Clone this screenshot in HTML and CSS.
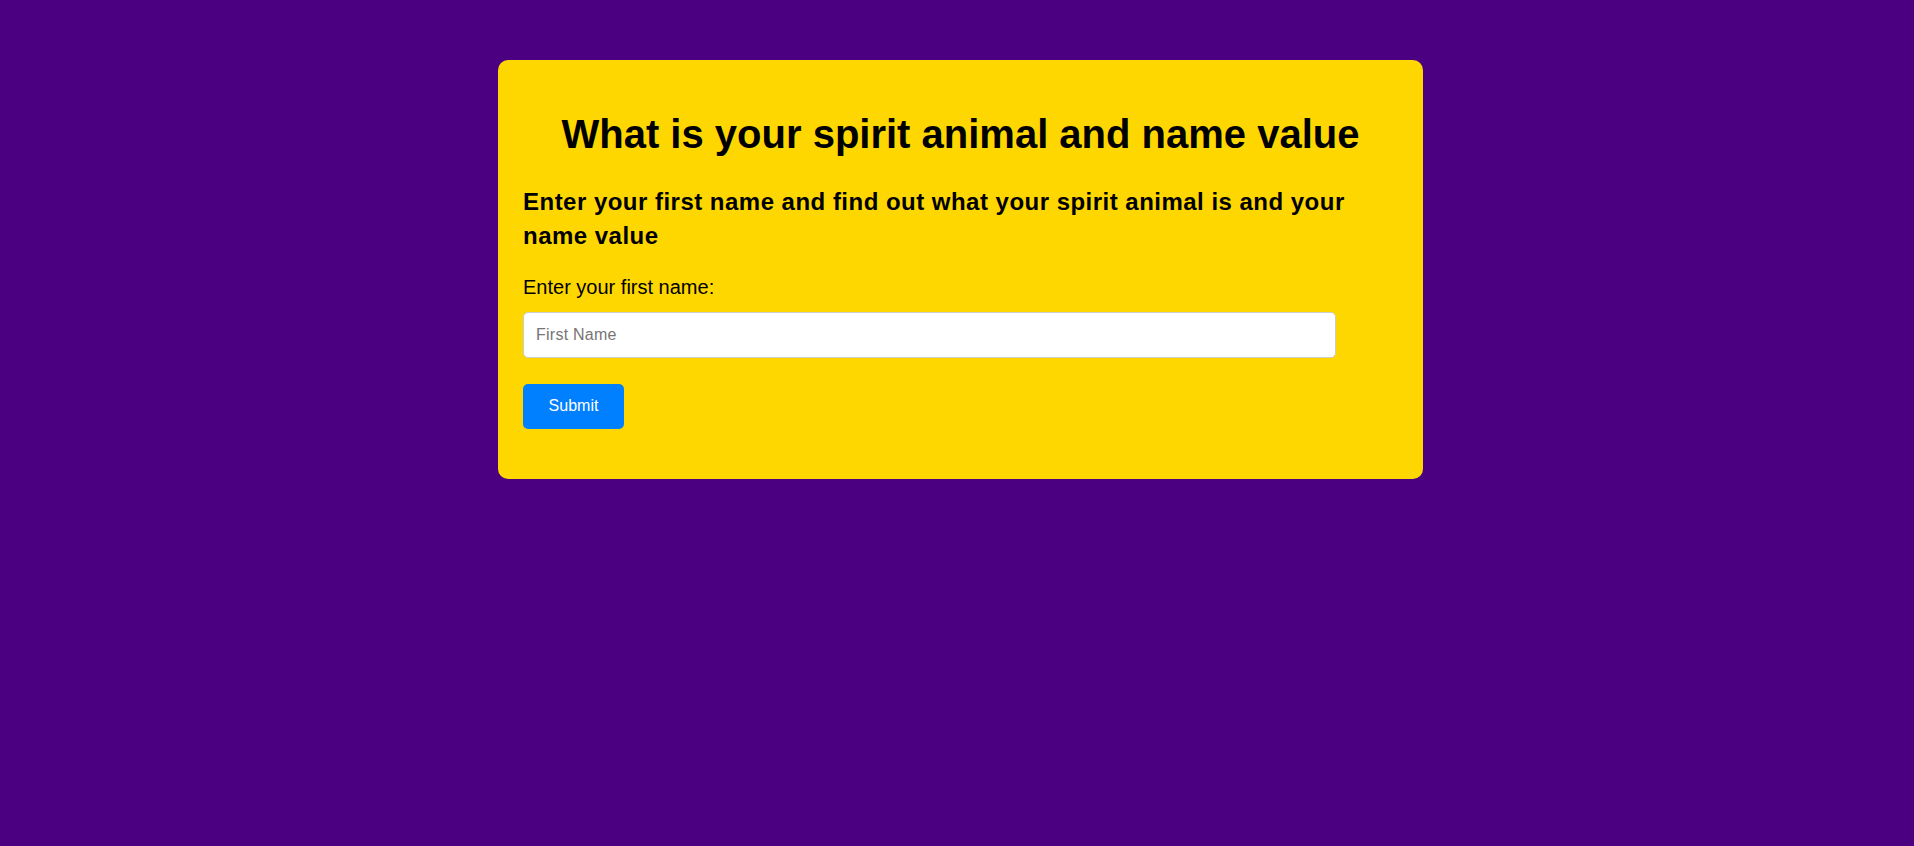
FILE: index.html
```html
<!DOCTYPE html>
<html lang="en">
<head>
<meta charset="utf-8">
<title>Spirit Animal</title>
<link rel="stylesheet" href="styles.css">
</head>
<body>
  <main class="card">
    <h1 class="title">What is your spirit animal and name value</h1>
    <h3 class="subtitle">Enter your first name and find out what your spirit animal is and your name value</h3>
    <form class="form" onsubmit="return false;">
      <label class="label" for="firstName">Enter your first name:</label>
      <input class="input" id="firstName" type="text" placeholder="First Name">
      <button class="button" type="submit">Submit</button>
    </form>
  </main>
</body>
</html>
```

FILE: styles.css
```css
html, body {
  margin: 0;
  padding: 0;
}

body {
  background: #4b0082;
  font-family: "Liberation Sans", Arial, sans-serif;
  color: #000;
  padding: 60px 0 0 7px;
  min-height: 846px;
  box-sizing: border-box;
}

.card {
  width: 925px;
  box-sizing: border-box;
  margin: 0 auto;
  background: #ffd700;
  border-radius: 10px;
  padding: 25px 25px 50px 25px;
}

.title {
  margin: 25px 0 0 0;
  font-size: 40px;
  line-height: 48px;
  font-weight: bold;
  text-align: center;
}

.subtitle {
  margin: 27px 0 0 0;
  font-size: 24px;
  line-height: 33.6px;
  font-weight: bold;
  letter-spacing: 0.48px;
}

.form {
  display: flex;
  flex-direction: column;
  align-items: flex-start;
  margin-top: 21px;
}

.label {
  font-size: 20px;
  line-height: 28px;
}

.input {
  margin-top: 11px;
  width: 813px;
  height: 46px;
  box-sizing: border-box;
  border: 1px solid #cccccc;
  border-radius: 5px;
  background: #fff;
  padding: 0 12px;
  font-family: "Liberation Sans", Arial, sans-serif;
  font-size: 16px;
  color: #000;
  outline: none;
}

.input::placeholder {
  color: #757575;
  letter-spacing: 0.25px;
}

.button {
  margin-top: 26px;
  width: 101px;
  height: 45px;
  box-sizing: border-box;
  border: none;
  border-radius: 5px;
  background: #0080ff;
  color: #fff;
  font-family: "Liberation Sans", Arial, sans-serif;
  font-size: 16px;
  padding: 0 0 2px 0;
  cursor: pointer;
}
```
